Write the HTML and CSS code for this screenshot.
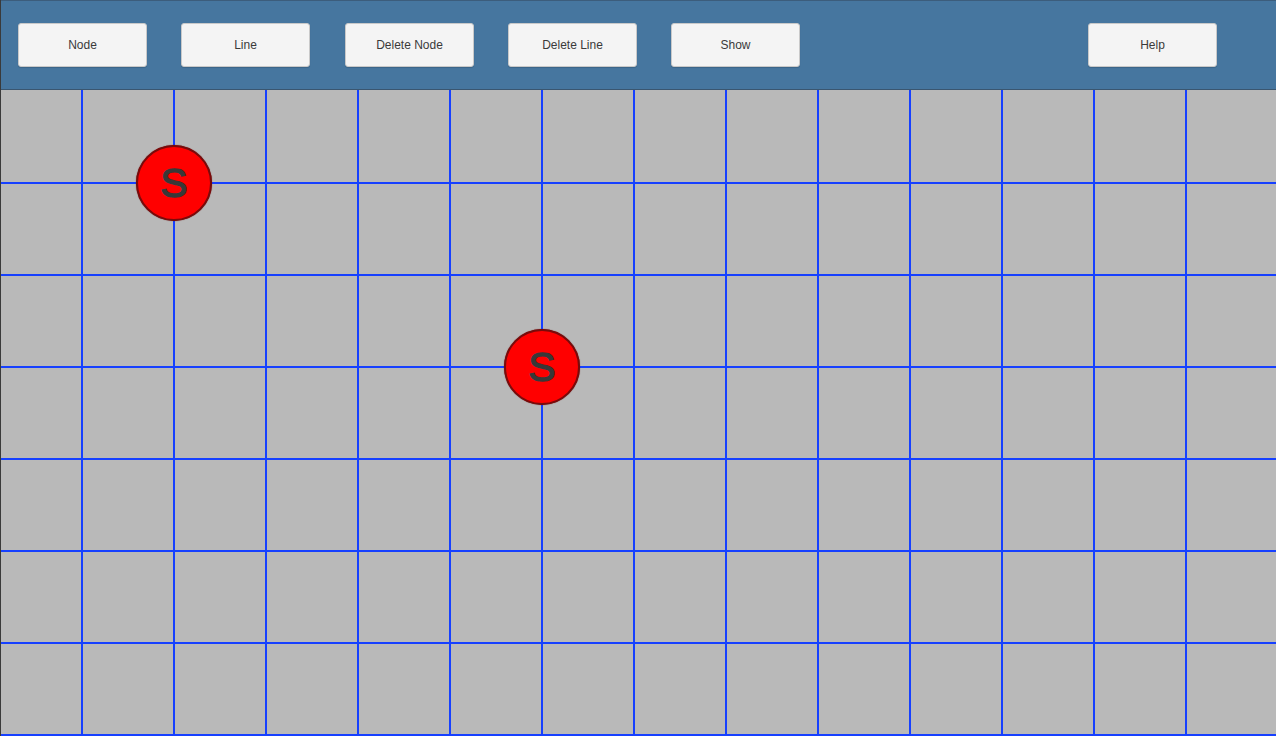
FILE: index.html
```html
<!DOCTYPE html>
<html>
<head>
<meta charset="utf-8">
<link rel="stylesheet" href="styles.css">
</head>
<body>
<div class="app">
  <header class="toolbar">
    <button class="btn">Node</button>
    <button class="btn">Line</button>
    <button class="btn">Delete Node</button>
    <button class="btn">Delete Line</button>
    <button class="btn">Show</button>
    <button class="btn btn-help">Help</button>
  </header>
  <main class="canvas">
    <div class="node" style="left:135px; top:53px;">S</div>
    <div class="node" style="left:503px; top:237px;">S</div>
  </main>
</div>
</body>
</html>
```
FILE: styles.css
```css
html, body {
  margin: 0;
  padding: 0;
  width: 1276px;
  height: 736px;
  overflow: hidden;
  font-family: "Liberation Sans", Arial, sans-serif;
}
.app {
  width: 1276px;
  height: 736px;
  display: flex;
  flex-direction: column;
  border-left: 1px solid #3a3a3a;
  box-sizing: border-box;
  background: #b9b9b9;
}
.toolbar {
  height: 90px;
  box-sizing: border-box;
  background: #46769f;
  border-top: 1px solid #3c5d7c;
  border-bottom: 1px solid #3a5670;
  display: flex;
  align-items: flex-start;
  padding: 22px 59px 0 17px;
  gap: 34px;
  flex: none;
}
.btn {
  width: 129px;
  height: 44px;
  background: #f4f4f4;
  border: 1px solid #c9c9c9;
  border-radius: 3px;
  font-family: "Liberation Sans", Arial, sans-serif;
  font-size: 12px;
  color: #3a3a3a;
  padding: 0;
  box-shadow: 0 1px 1px rgba(0,0,0,0.15);
}
.btn:nth-child(3) { margin-left: 1px; }
.btn-help { margin-left: auto; }
.canvas {
  position: relative;
  flex: 1;
  border-top: 2px solid transparent;
  background-color: #b9b9b9;
  background-image:
    linear-gradient(to right, #1640ff 0, #1640ff 2px, transparent 2px),
    linear-gradient(to bottom, #1640ff 0, #1640ff 2px, transparent 2px);
  background-size: 92px 92px;
  background-position: 80px 0, 80px 90px;
  background-origin: border-box, padding-box;
  background-clip: border-box, padding-box;
}
.node {
  position: absolute;
  width: 76px;
  height: 76px;
  box-sizing: border-box;
  border-radius: 50%;
  background: #ff0000;
  border: 2px solid #7a0a0a;
  box-shadow: 0 0 1px #5a0000;
  color: #383838;
  font-family: "Liberation Sans", Arial, sans-serif;
  font-size: 41px;
  -webkit-text-stroke: 1.3px #383838;
  line-height: 73px;
  text-align: center;
}
```
